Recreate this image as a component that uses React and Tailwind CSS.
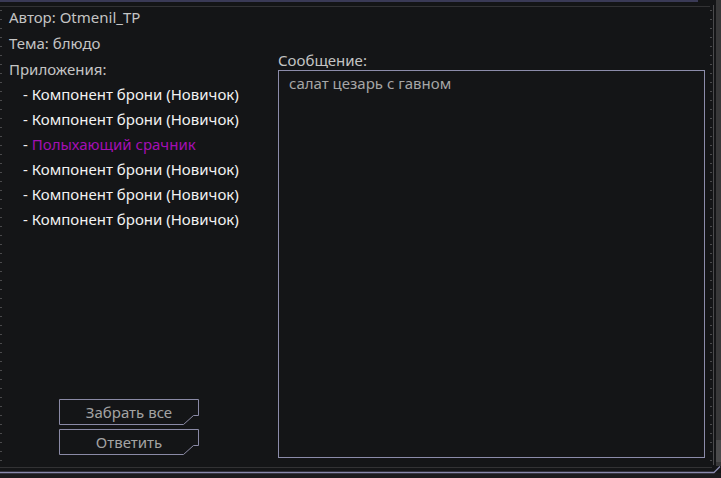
import React from 'react'

const attachments = [
  { name: 'Компонент брони (Новичок)' },
  { name: 'Компонент брони (Новичок)' },
  { name: 'Полыхающий срачник', special: true },
  { name: 'Компонент брони (Новичок)' },
  { name: 'Компонент брони (Новичок)' },
  { name: 'Компонент брони (Новичок)' },
]

function Ruler({ className, side }) {
  // tick marks along the frame edge
  const ticks = []
  for (let y = 10; y < 466; y += 9) ticks.push(y)
  return (
    <svg className={className} width="6" height="470" viewBox="0 0 6 470">
      {side === 'right' && <rect x="3" y="5" width="1" height="460" fill="#4a4a4c" />}
      {ticks.map((y) => (
        <rect key={y} x="0" y={y} width="2" height="1" fill="#4a4a4c" />
      ))}
    </svg>
  )
}

function CutButton({ children }) {
  return (
    <button className="relative w-[140px] h-[26px] text-[15px] text-[#a3a3a3] leading-[26px] text-center">
      <svg className="absolute inset-0" width="140" height="26" viewBox="0 0 140 26">
        <path d="M0.5 0.5 H139.5 V16.5 H134.5 L124.5 25.5 H0.5 Z" fill="none" stroke="#8a8aa6" strokeWidth="1" />
      </svg>
      <span className="relative">{children}</span>
    </button>
  )
}

export default function App() {
  return (
    <div className="relative w-[721px] h-[478px] overflow-hidden bg-[#141517] font-['Noto_Sans',sans-serif]">
      {/* frame chrome */}
      <div className="absolute left-0 top-0 w-[698px] h-[2px] bg-[#3a3a56]" />
      <div className="absolute left-0 top-[6px] w-[710px] h-px bg-[#323234]" />
      <div className="absolute left-0 top-[467px] w-[712px] h-px bg-[#323234]" />
      <div className="absolute left-0 top-[473px] w-[721px] h-[5px] bg-[#1b1b1e]" />
      <svg className="absolute left-0 top-[464px]" width="721" height="10" viewBox="0 0 721 10">
        <path d="M0 8.5 H714 L720 2.5" fill="none" stroke="#8a8aae" strokeWidth="1.3" />
      </svg>
      <div className="absolute left-[716px] top-0 w-[5px] h-[466px] bg-[#383839]" />
      <div className="absolute left-[716px] top-[440px] w-[5px] h-[22px] bg-[#4a4a4b]" />
      <Ruler className="absolute left-[710px] top-0" side="right" />
      <Ruler className="absolute left-0 top-0" side="left" />

      {/* content */}
      <div className="flex h-[458px] pt-[4px]">
        <div className="flex flex-col w-[278px] pl-[9px]">
          <div className="text-[15px] leading-[26px] text-[#c4c4c4]">Автор: Otmenil_TP</div>
          <div className="text-[15px] leading-[26px] text-[#c4c4c4]">Тема: блюдо</div>
          <div className="text-[15px] leading-[26px] text-[#c4c4c4]">Приложения:</div>
          <ul className="pl-[14px]">
            {attachments.map((a, i) => (
              <li key={i} className="text-[15px] leading-[25px] text-[#f2f2f2]">
                - <span className={a.special ? 'text-[#a40fb4]' : ''}>{a.name}</span>
              </li>
            ))}
          </ul>
          <div className="mt-auto flex flex-col gap-[4px] pl-[50px] pb-[3px]">
            <CutButton>Забрать все</CutButton>
            <CutButton>Ответить</CutButton>
          </div>
        </div>

        <div className="flex flex-col w-[427px] pt-[46px]">
          <div className="text-[15px] leading-[20px] text-[#c4c4c4]">Сообщение:</div>
          <div className="flex-1 border border-[#8c8caa] px-[10px]">
            <div className="text-[15px] leading-[24px] text-[#a6a6a6]">салат цезарь с гавном</div>
          </div>
        </div>
      </div>
    </div>
  )
}
